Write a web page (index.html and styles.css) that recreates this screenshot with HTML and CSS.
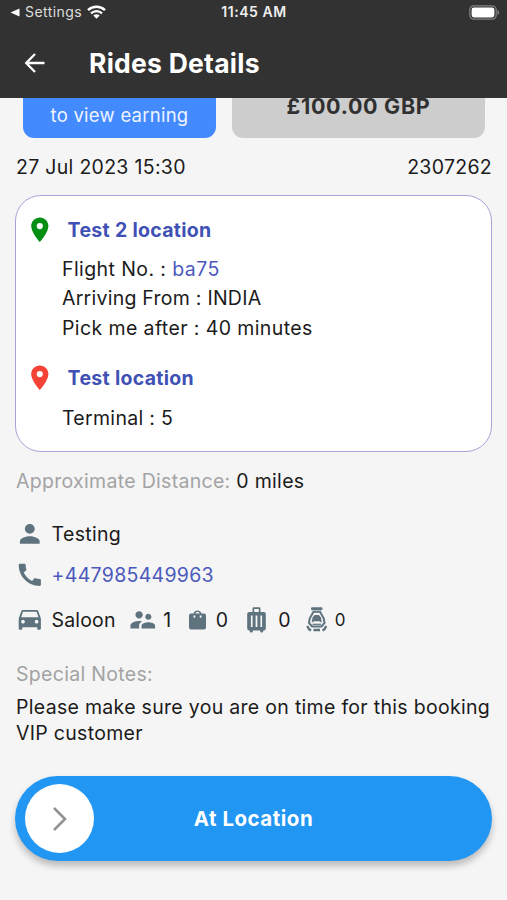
FILE: index.html
```html
<!DOCTYPE html>
<html lang="en">
<head>
<meta charset="utf-8">
<title>Rides Details</title>
<link rel="stylesheet" href="styles.css">
</head>
<body>
<header class="header">
  <div class="status">
    <div class="status-left">
      <svg class="back-tri" viewBox="0 0 10 10"><path d="M0 5 10 .5v9z"/></svg>
      <span class="status-app">Settings</span>
      <svg class="wifi" viewBox="0 0 19 14"><path d="M1 5.2a12.3 12.3 0 0 1 17 0M4 8.3a8 8 0 0 1 11 0"/><path class="dot" d="M9.5 13.7 6.3 10.5a4.6 4.6 0 0 1 6.4 0z"/></svg>
    </div>
    <span class="status-time">11:45 AM</span>
    <svg class="battery" viewBox="0 0 31 15"><rect class="shell" x=".8" y=".8" width="26.4" height="13.4" rx="4"/><rect class="charge" x="2.6" y="2.6" width="22.8" height="9.8" rx="2.4"/><path class="cap" d="M28.5 5c2.2.8 2.2 4.200 0 5z"/></svg>
  </div>
  <div class="appbar">
    <svg class="back" viewBox="0 0 20 20"><path d="M19.500 10H1.500M10 1 1.200 10 10 19"/></svg>
    <h1 class="title">Rides Details</h1>
  </div>
</header>
<main class="page">
  <div class="tiles">
    <div class="tile tile-view"><span class="view-text">to view earning</span></div>
    <div class="tile tile-price"><span class="price-text">£100.00 GBP</span></div>
  </div>
  <div class="meta"><span class="date">27 Jul 2023 15:30</span><span class="ref">2307262</span></div>
  <section class="card">
    <div class="place">
      <svg class="icon pin-green" viewBox="0 0 24 24"><path d="M12 2C8.130 2 5 5.130 5 9c0 5.250 7 13 7 13s7-7.750 7-13c0-3.870-3.130-7-7-7zm0 9.500a2.500 2.500 0 1 1 0-5 2.500 2.500 0 0 1 0 5z"/></svg>
      <h2 class="place-name">Test 2 location</h2>
    </div>
    <div class="details">
      <p class="flight">Flight No. : <span class="link">ba75</span></p>
      <p class="arriving">Arriving From : INDIA</p>
      <p class="pick">Pick me after : 40 minutes</p>
    </div>
    <div class="place">
      <svg class="icon pin-red" viewBox="0 0 24 24"><path d="M12 2C8.130 2 5 5.130 5 9c0 5.250 7 13 7 13s7-7.750 7-13c0-3.870-3.130-7-7-7zm0 9.500a2.500 2.500 0 1 1 0-5 2.500 2.500 0 0 1 0 5z"/></svg>
      <h2 class="place-name">Test location</h2>
    </div>
    <div class="details"><p class="terminal">Terminal : 5</p></div>
  </section>
  <p class="distance"><span class="muted">Approximate Distance:</span> <span>0 miles</span></p>
  <div class="row row-person">
    <svg class="icon" viewBox="0 0 24 24"><path d="M12 12c2.210 0 4-1.790 4-4s-1.790-4-4-4-4 1.790-4 4 1.790 4 4 4zm0 2c-2.670 0-8 1.340-8 4v2h16v-2c0-2.660-5.330-4-8-4z"/></svg>
    <span class="person">Testing</span>
  </div>
  <div class="row row-phone">
    <svg class="icon" viewBox="0 0 24 24"><path d="M20.010 15.380c-1.230 0-2.420-.2-3.530-.56-.35-.12-.74-.03-1.010.24l-1.570 1.970c-2.830-1.350-5.480-3.900-6.890-6.830l1.950-1.660c.27-.28.35-.67.24-1.020-.37-1.110-.56-2.300-.56-3.530 0-.54-.45-.99-.99-.99H4.190C3.650 3 3 3.240 3 3.990 3 13.280 10.730 21 20.010 21c.71 0 .99-.63.99-1.180v-3.450c0-.54-.45-.99-.99-.99z"/></svg>
    <a class="link phone">+447985449963</a>
  </div>
  <div class="row row-vehicle">
    <svg class="icon" viewBox="0 0 24 24"><path d="M18.920 5.010C18.720 4.420 18.160 4 17.500 4h-11c-.66 0-1.210.42-1.420 1.010L3 11v8c0 .55.45 1 1 1h1c.55 0 1-.45 1-1v-1h12v1c0 .55.45 1 1 1h1c.55 0 1-.45 1-1v-8l-2.080-5.990zM6.500 15c-.83 0-1.500-.67-1.500-1.500S5.670 12 6.500 12s1.500.67 1.500 1.500S7.330 15 6.500 15zm11 0c-.83 0-1.500-.67-1.500-1.500s.67-1.500 1.500-1.500 1.500.67 1.500 1.500-.67 1.500-1.500 1.500zM5 10l1.500-4.500h11L19 10H5z"/></svg>
    <span class="v-type">Saloon</span>
    <svg class="icon people" viewBox="0 0 24 24"><path d="M16.500 12c1.380 0 2.490-1.120 2.490-2.500S17.880 7 16.500 7C15.120 7 14 8.120 14 9.500s1.120 2.500 2.500 2.500zM9 11c1.660 0 2.990-1.340 2.990-3S10.660 5 9 5C7.340 5 6 6.340 6 8s1.340 3 3 3zm7.500 3c-1.830 0-5.500.92-5.500 2.750V19h11v-2.250c0-1.830-3.670-2.750-5.500-2.750zM9 13c-2.330 0-7 1.170-7 3.500V19h7v-2.250c0-.85.33-2.340 2.370-3.470C10.500 13.100 9.660 13 9 13z"/></svg>
    <span class="v-people">1</span>
    <svg class="bag" viewBox="0 0 17 21"><path fill-rule="evenodd" d="M2 4.500h2.500a4.200 4.200 0 0 1 8 0H15a2 2 0 0 1 2 2V18.500a2 2 0 0 1-2 2H2a2 2 0 0 1-2-2V6.500a2 2 0 0 1 2-2zm4.300 0h4.400a2.300 2.300 0 0 0-4.400 0zM4.500 6.500v1.400a.9.900 0 0 0 1.800 0V6.500zm6.200 0v1.400a.9.900 0 0 0 1.800 0V6.500z"/></svg>
    <span class="v-bags">0</span>
    <svg class="case" viewBox="0 0 19 26"><path fill-rule="evenodd" d="M5.500 5V1.500Q5.500.3 6.700.3h5.600q1.200 0 1.200 1.200V5h3.300q2 0 2 2v14.500q0 2-2 2h-.6v1q0 1-1.200 1h-.8q-1 0-1-1v-1H5.800v1q0 1-1 1H4q-1.200 0-1.200-1v-1h-.6q-2 0-2-2V7q0-2 2-2zm1.700 0h4.600V2H7.200zM3.900 8.500V20h1.700V8.500zm4.700 0V20h1.800V8.500zm4.800 0V20h1.700V8.500z"/></svg>
    <span class="v-cases">0</span>
    <svg class="seat" viewBox="0 0 22 25"><rect class="solid" x="5" y=".3" width="11.500" height="3" rx="1.200"/><path d="M7.500 4.800h6.500L17.800 11.500 18.500 16 15.500 19.500H6L3 16 3.700 11.500z"/><path class="solid" d="M8.700 8h4.100l2.200 2.500.8 5-2.500-1.300H8.200l-2.500 1.300.8-5z"/><path class="thin" d="M6.500 17.300h8.500"/><path class="foot" d="M1.300 19 3 22.200 5 23.500M20.200 19 18.500 22.200 16.500 23.500M7.500 23h6.500"/></svg>
    <span class="v-seats">0</span>
  </div>
  <p class="notes-label muted">Special Notes:</p>
  <p class="notes"><span class="note-one">Please make sure you are on time for this booking</span><br><span class="note-two">VIP customer</span></p>
  <div class="slider">
    <div class="knob"><svg class="chevron" viewBox="0 0 14 24"><path d="m1 1 11 11L1 23"/></svg></div>
    <span class="slider-label">At Location</span>
  </div>
</main>
</body>
</html>
```
FILE: styles.css
```css
* { box-sizing: border-box; }
body {
  margin: 0;
  width: 507px;
  height: 900px;
  overflow: hidden;
  background: #f5f5f5;
  color: #1b1b1b;
  font: 19.5px/29.4px Inter, "Liberation Sans", sans-serif;
  letter-spacing: .3px;
}
h1, h2, p { margin: 0; }
svg { display: block; flex: none; overflow: visible; }
span, a, h1, h2, p { white-space: nowrap; }
.header { height: 98px; background: #323232; color: #fff; }
.status {
  display: grid;
  grid-template-columns: 1fr auto 1fr;
  align-items: center;
  height: 26px;
  padding: 0 7px 0 10px;
  line-height: 24px;
}
.status-left { display: flex; align-items: center; height: 24px; }
.status > * { margin-bottom: 2px; }
.back-tri { width: 10px; height: 9px; fill: #fff; }
.status-app { margin-left: 5px; font-size: 14px; letter-spacing: .45px; color: #ddd; }
.wifi { width: 19px; height: 14px; margin-left: 5px; fill: none; stroke: #fff; stroke-width: 2.4; }
.wifi .dot { fill: #fff; stroke: none; }
.status .status-time { margin-right: 2px; font-size: 14px; font-weight: 600; letter-spacing: .55px; color: #eee; }
.battery { width: 31px; height: 15px; justify-self: end; }
.shell { fill: none; stroke: #828282; stroke-width: 1.2; }
.charge { fill: #fff; }
.cap { fill: #828282; }
.appbar { display: flex; align-items: center; height: 72px; padding: 1px 0 0 25px; }
.back { width: 20px; height: 20px; fill: none; stroke: #fff; stroke-width: 2.3; }
.title { margin-left: 44px; font-size: 26.5px; line-height: 30px; font-weight: 700; letter-spacing: .25px; }
.tiles { display: flex; gap: 16px; height: 40px; padding: 0 22px 0 23px; }
.tile { height: 40px; text-align: center; }
.tile-view { width: 193px; border-radius: 0 0 11px 11px; background: #448aff; color: #eef4ff; }
.tile-view span { display: block; padding-top: 3px; font-size: 18.500px; letter-spacing: .25px; }
.tile-price { width: 253px; border-radius: 0 0 11px 11px; background: #cdcdcd; color: #303030; }
.tile-price span { display: block; font-size: 21.500px; line-height: 17px; font-weight: 700; letter-spacing: .7px; }
.meta { display: flex; justify-content: space-between; margin: 15px 15px 0 16px; height: 42px; }
.card {
  width: 477px;
  height: 257px;
  margin-left: 15px;
  padding: 19px 0 0 9px;
  border: 1px solid #a5a5d9;
  border-radius: 26px;
  background: #fff;
}
.place { display: flex; align-items: center; height: 29px; }
.icon { width: 29.6px; height: 29.6px; fill: #5f737e; }
.pin-green { fill: #048f12; }
.pin-red { fill: #f44336; }
.place-name { margin-left: 13px; font-size: 19.5px; line-height: 30px; font-weight: 700; letter-spacing: .3px; color: #3f51b5; }
.link { color: #4b59bd; }
.details { margin: 11px 0 20.500px 37px; }
.flight { letter-spacing: .41px; }
.arriving { letter-spacing: .25px; }
.pick { letter-spacing: .39px; }
.muted { color: #a3a3a3; }
.distance { margin: 14px 0 0 16px; height: 53px; line-height: 30px; }
.row { display: flex; align-items: center; padding-left: 15px; line-height: 31px; }
.row-person { height: 30px; }
.row-phone { height: 30px; margin-top: 11px; }
.row-vehicle { height: 30px; margin-top: 15px; }
.person, .phone, .v-type { margin-left: 7px; }
.v-type { width: 65px; letter-spacing: .15px; }
.people { margin-left: 11px; }
.v-people { margin-left: 6px; width: 9px; }
.bag { width: 17px; height: 21px; margin: 0 0 2px 16.500px; fill: #5f737e; }
.v-bags { margin-left: 10px; width: 13px; }
.case { width: 19px; height: 26px; margin-left: 18.500px; fill: #5f737e; }
.v-cases { margin-left: 12px; width: 13px; }
.seat { width: 22px; height: 25px; margin: 0 0 1px 14.500px; fill: none; stroke: #5f737e; stroke-width: 2; }
.seat .solid { fill: #5f737e; stroke: none; }
.seat .thin { stroke-width: 1.200; }
.seat .foot { stroke-width: 2.400; }
.v-seats { margin-left: 7px; font-size: 17px; }
.notes-label { margin: 24px 0 0 16px; line-height: 30px; }
.notes { margin: 5px 0 0 16px; line-height: 26px; }
.slider {
  display: grid;
  grid-template-columns: 69px 1fr 69px;
  align-items: center;
  width: 477px;
  height: 85px;
  margin: 30px 0 0 15px;
  padding: 0 10px;
  border-radius: 43px;
  background: #2196f3;
  box-shadow: 0 5px 7px rgba(0, 0, 0, .24);
}
.knob { display: flex; align-items: center; justify-content: center; width: 69px; height: 69px; border-radius: 50%; background: #fff; }
.chevron { width: 14px; height: 24px; fill: none; stroke: #929292; stroke-width: 2.600; }
.slider-label { text-align: center; font-size: 20.5px; font-weight: 700; letter-spacing: .5px; color: #fff; }
```
